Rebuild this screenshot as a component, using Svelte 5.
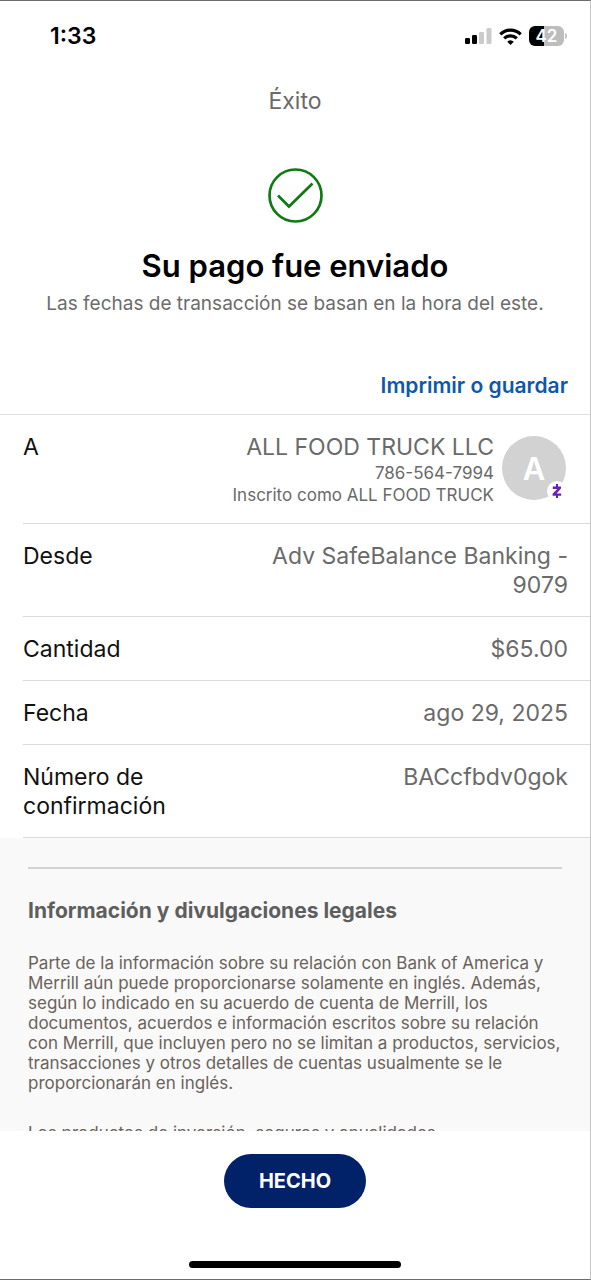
<script>
  const rows = [
    { label: 'Desde', value: 'Adv SafeBalance Banking - 9079' },
    { label: 'Cantidad', value: '$65.00' },
    { label: 'Fecha', value: 'ago 29, 2025' },
    { label: 'Número de confirmación', value: 'BACcfbdv0gok' }
  ];
</script>

<div class="screen">
  <div class="status">
    <span class="time">1:33</span>
    <div class="indicators">
      <svg width="27" height="16" viewBox="0 0 27 16" aria-hidden="true">
        <rect x="0" y="10" width="5" height="6" rx="1.3" />
        <rect x="7" y="7" width="5" height="9" rx="1.3" />
        <rect x="14" y="4" width="5" height="12" rx="1.3" fill="#cbcbcb" />
        <rect x="21.500" y="0" width="5" height="16" rx="1.3" fill="#cbcbcb" />
      </svg>
      <svg width="23" height="17" viewBox="0 0 23 17" aria-hidden="true">
        <g fill="none" stroke="#000" stroke-width="3.200">
          <path d="M1.300 6.300a14.600 14.600 0 0 1 20.400 0" />
          <path d="M5.200 10.400a9 9 0 0 1 12.600 0" />
        </g>
        <path d="M11.500 17l-3.300-3.300a4.800 4.800 0 0 1 6.600 0z" />
      </svg>
      <div class="battery">
        <span class="level">42</span>
        <i class="tip"></i>
      </div>
    </div>
  </div>

  <header class="title">Éxito</header>

  <main>
    <section class="result">
      <svg width="56" height="56" viewBox="0 0 56 56" fill="none" stroke="#0e7a12" stroke-width="2.700" aria-hidden="true">
        <circle cx="28.500" cy="28.500" r="26" />
        <path d="M11 28.500L22 39.500L45.500 16.500" />
      </svg>
      <h1>Su pago fue enviado</h1>
      <p>Las fechas de transacción se basan en la hora del este.</p>
    </section>

    <div class="actions"><a href="#guardar">Imprimir o guardar</a></div>

    <dl>
      <div class="row payee">
        <dt>A</dt>
        <dd>
          <span class="name">ALL FOOD TRUCK LLC</span>
          <span class="small">786-564-7994</span>
          <span class="small">Inscrito como ALL FOOD TRUCK</span>
        </dd>
        <dd class="avatar">
          A
          <svg class="badge" width="20" height="20" viewBox="0 0 20 20" aria-hidden="true">
            <circle cx="10" cy="10" r="10" fill="#fff" />
            <path d="M5.800 5.500h8.200v2L9.600 12.400h4.600v2.400H5.600v-2L10.200 7.900H5.800z" fill="#6a1fb8" />
            <path d="M10 3v3M10 14v3" fill="none" stroke="#6a1fb8" stroke-width="2" />
          </svg>
        </dd>
      </div>
      {#each rows as row}
        <div class="row">
          <dt>{row.label}</dt>
          <dd>{row.value}</dd>
        </div>
      {/each}
    </dl>

    <section class="legal">
      <hr />
      <h2>Información y divulgaciones legales</h2>
      <p>
        Parte de la información sobre su relación con Bank of America y Merrill aún puede
        proporcionarse solamente en inglés. Además, según lo indicado en su acuerdo de cuenta de
        Merrill, los documentos, acuerdos e información escritos sobre su relación con Merrill, que
        incluyen pero no se limitan a productos, servicios, transacciones y otros detalles de
        cuentas usualmente se le proporcionarán en inglés.
      </p>
      <p>Los productos de inversión, seguros y anualidades</p>
    </section>
  </main>

  <footer>
    <button type="button">HECHO</button>
    <div class="home"></div>
  </footer>
</div>

<style>
  :global(body) {
    margin: 0;
  }
  .screen {
    box-sizing: border-box;
    display: flex;
    flex-direction: column;
    height: 100vh;
    border: 1px solid #6c6c6e;
    border-left: 0;
    border-right-color: #c4c4c6;
    background: #fff;
    color: #111;
    font-family: Inter, "Liberation Sans", sans-serif;
    overflow: hidden;
  }
  .status {
    display: flex;
    flex: none;
    justify-content: space-between;
    align-items: center;
    height: 70px;
    padding: 0 26px 0 50px;
  }
  .time {
    font-size: 23px;
    font-weight: 600;
    color: #000;
  }
  .indicators {
    display: flex;
    align-items: center;
    gap: 7px;
  }
  .battery {
    position: relative;
    display: flex;
    width: 35px;
    height: 20px;
    border-radius: 6px;
    background: linear-gradient(90deg, #000 42%, #bdbdbd 42%);
  }
  .level {
    flex: 1;
    text-align: center;
    color: #fff;
    font-size: 17px;
    line-height: 20px;
    font-weight: 600;
  }
  .tip {
    position: absolute;
    left: 36px;
    top: 7px;
    width: 2px;
    height: 6px;
    border-radius: 0 2px 2px 0;
    background: #c4c4c4;
  }
  .title {
    flex: none;
    text-align: center;
    font-size: 23px;
    line-height: 60px;
    color: #6a6a6a;
  }
  main {
    flex: 1;
    min-height: 0;
    overflow: hidden;
  }
  .result {
    display: flex;
    flex-direction: column;
    align-items: center;
    padding-top: 36px;
    text-align: center;
  }
  h1 {
    margin: 23px 0 0;
    font-size: 31px;
    line-height: 40px;
    font-weight: 600;
    color: #000;
  }
  .result p {
    margin: 5px 0 0;
    font-size: 19px;
    line-height: 26px;
    color: #6c6c6c;
  }
  .actions {
    padding: 55px 22px 14px;
    text-align: right;
    font-size: 21px;
    line-height: 28px;
    border-bottom: 1px solid #e0e0e0;
  }
  a {
    color: #0f58a8;
    font-weight: 600;
    text-decoration: none;
  }
  dl {
    margin: 0;
    padding-left: 23px;
    font-size: 23px;
    line-height: 29px;
  }
  .row {
    display: flex;
    justify-content: space-between;
    gap: 8px;
    padding: 18px 22px 16px 0;
    border-bottom: 1px solid #dcdcdc;
  }
  dt {
    flex: 0 1 200px;
  }
  dd {
    flex: 0 1 310px;
    margin: 0;
    text-align: right;
    color: #6a6a6a;
  }
  .payee {
    padding-bottom: 17px;
  }
  .payee dt {
    flex: 1;
  }
  .payee dd {
    flex: none;
    display: flex;
    flex-direction: column;
  }
  .small {
    font-size: 17px;
    line-height: 22px;
  }
  .payee .avatar {
    position: relative;
    align-items: center;
    justify-content: center;
    align-self: flex-start;
    width: 64px;
    height: 64px;
    margin: 3px 2px 0 0;
    border-radius: 50%;
    background: #d2d2d2;
    color: #fff;
    font-size: 31px;
    font-weight: 600;
  }
  .badge {
    position: absolute;
    right: -1px;
    bottom: -1px;
  }
  .legal {
    padding: 29px 28px;
    background: #f9f9f9;
  }
  hr {
    height: 2px;
    margin: 0;
    border: 0;
    background: #d4d4d4;
  }
  h2 {
    margin: 28px 0;
    font-size: 21px;
    line-height: 28px;
    font-weight: 700;
    color: #5e5e5e;
  }
  .legal p {
    margin: 0 0 30px;
    font-size: 17px;
    line-height: 20px;
    color: #6a625c;
  }
  footer {
    display: flex;
    flex: none;
    flex-direction: column;
    align-items: center;
    padding: 23px 0 11px;
  }
  button {
    height: 54px;
    padding: 0 35px;
    border: 0;
    border-radius: 27px;
    background: #012169;
    color: #fff;
    font: 700 20px Inter, "Liberation Sans", sans-serif;
  }
  .home {
    width: 36%;
    height: 7px;
    margin-top: 53px;
    border-radius: 4px;
    background: #000;
  }
</style>
